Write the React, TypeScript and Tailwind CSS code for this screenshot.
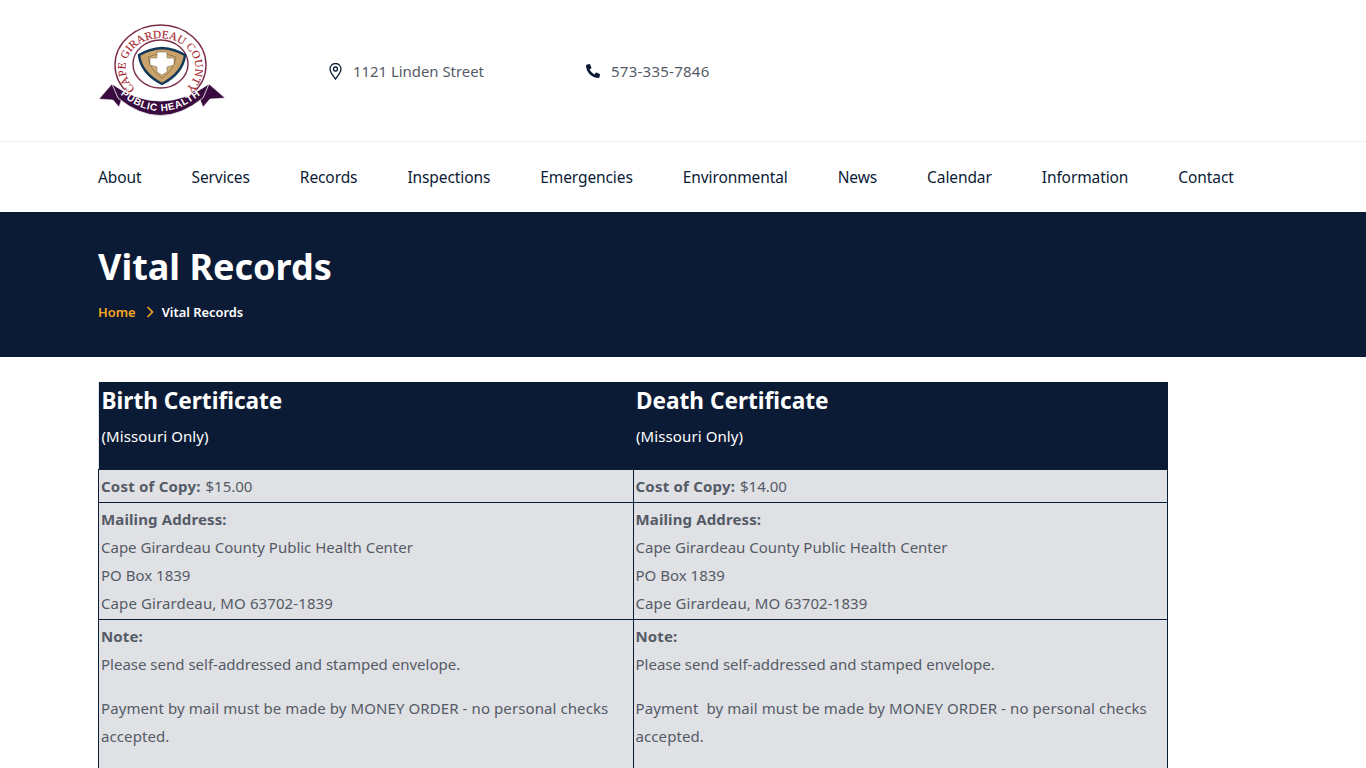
import React from "react";
import { FaPhoneAlt } from "react-icons/fa";

const font = { fontFamily: '"Noto Sans", sans-serif' };

function Logo() {
  return (
    <svg width="128" height="94" viewBox="0 0 128 94" className="block">
      <defs>
        <path id="ringText" d="M40 67 A35 30 0 1 1 85 67" fill="none" />
        <path id="ribbonText" d="M17 66 Q62 108 108 66" fill="none" />
      </defs>
      <ellipse cx="62.5" cy="41" rx="45.5" ry="40" fill="#fff" stroke="#7b2b48" strokeWidth="1.4" />
      <text fontSize="11.2" fontFamily='"Liberation Serif", serif' fill="#a81f2e" stroke="#a81f2e" strokeWidth="0.15" letterSpacing="0.1" textAnchor="middle">
        <textPath href="#ringText" startOffset="50%">CAPE GIRARDEAU COUNTY</textPath>
      </text>
      <ellipse cx="62.5" cy="40" rx="27.5" ry="24" fill="#fff" stroke="#7b2b48" strokeWidth="1.4" />
      <path d="M64 24 Q77 25 87 31 Q85 49 64 60 Q43 49 41 31 Q51 25 64 24Z" fill="#c9a36b" stroke="#14395b" strokeWidth="2.4" />
      <path d="M50 33 Q64 27 78 33 Q76 46 64 54 Q52 46 50 33Z" fill="#cfae7a" stroke="#8c6d3f" strokeWidth="0.8" />
      <path d="M59 28 H69 V34 H76 V41 L69 43 V48 L64 51 L59 48 V43 L52 41 V34 H59Z" fill="#fff" stroke="#6b5a3a" strokeWidth="0.5" />
      <path d="M14 60 L1 75 L15 76 L21 83 L26 68Z" fill="#3a0b3f" stroke="#fff" strokeWidth="0.5" />
      <path d="M111 60 L127 74 L112 75 L105 83 L99 68Z" fill="#3a0b3f" stroke="#fff" strokeWidth="0.5" />
      <path d="M14 60 Q62 94 111 60 L105 74 Q62 109 20 74Z" fill="#3a0b3f" stroke="#fff" strokeWidth="0.8" />
      <text fontSize="10" fontFamily='"Liberation Sans", sans-serif' fontWeight="700" fill="#fff" letterSpacing="0.7" textAnchor="middle">
        <textPath href="#ribbonText" startOffset="50%">PUBLIC HEALTH</textPath>
      </text>
    </svg>
  );
}

function Pin() {
  return (
    <svg width="13" height="17" viewBox="0 0 13 17" fill="none" stroke="#0c1b35" strokeWidth="1.3">
      <path d="M6.5 16 C4 12.5 1 9.5 1 6 A5.5 5.5 0 0 1 12 6 C12 9.5 9 12.5 6.5 16Z" />
      <circle cx="6.5" cy="6" r="2" />
    </svg>
  );
}

const nav = ["About", "Services", "Records", "Inspections", "Emergencies", "Environmental", "News", "Calendar", "Information", "Contact"];

function Cell({ children, right }: { children: React.ReactNode; right?: boolean }) {
  return <td className={"align-top border border-[#0c1b35] px-[2px] py-0 " + (right ? "w-[534px]" : "w-[535px]")}>{children}</td>;
}

function Column({ title }: { title: string }) {
  return (
    <th className="align-top text-left font-normal px-[3px] pt-[1px] h-[87px] text-white">
      <div className="text-[22.6px] leading-[36px] font-bold">{title}</div>
      <div className="text-[15px] leading-[35px] tracking-[0.1px]">(Missouri Only)</div>
    </th>
  );
}

function Address() {
  return (
    <>
      <div className="font-bold tracking-[0.125px]">Mailing Address:</div>
      <div>Cape Girardeau County Public Health Center</div>
      <div>PO Box 1839</div>
      <div className="tracking-[0.1px]">Cape Girardeau, MO 63702-1839</div>
    </>
  );
}

function Cost({ price }: { price: string }) {
  return (
    <div className="pt-[2px] h-[32px]">
      <b className="tracking-[0.2px] mr-[1px]">Cost of Copy:</b> {price}
    </div>
  );
}

function Note({ payment }: { payment: string }) {
  return (
    <>
      <div className="font-bold tracking-[0.125px]">Note:</div>
      <div>Please send self-addressed and stamped envelope.</div>
      <div className="mt-4 whitespace-pre-wrap tracking-[0.09px]">{payment}</div>
      <div className="h-[60px]" />
    </>
  );
}

export default function App() {
  return (
    <div className="h-[768px] overflow-hidden bg-white text-[#555b66] text-[15px] leading-[28px]" style={font}>
      <header className="h-[142px] flex items-start pl-[98px] border-b border-[#eeeeee]">
        <div className="mt-[24px] w-[128px]"><Logo /></div>
        <div className="ml-[103px] mt-[57px] flex items-center gap-[11px] w-[257px]">
          <Pin />
          <span className="text-[14.9px]">1121 Linden Street</span>
        </div>
        <div className="mt-[57px] flex items-center gap-[11px]">
          <FaPhoneAlt size={14} color="#0c1b35" />
          <span className="tracking-[0.25px]">573-335-7846</span>
        </div>
      </header>
      <nav className="h-[70px] flex items-center pl-[98px] gap-[50px] text-[#0c1b35] text-[15.5px] tracking-[-0.1px]">
        {nav.map((n) => (
          <a key={n}>{n}</a>
        ))}
      </nav>
      <section className="h-[145px] bg-[#0c1b35] pl-[98px] pt-[30px] text-white">
        <h1 className="text-[36px] leading-[50px] font-bold">Vital Records</h1>
        <div className="mt-[8px] flex items-center text-[12.9px] leading-[24px] font-semibold">
          <span className="text-[#f5a623]">Home</span>
          <svg width="10" height="12" viewBox="0 0 10 12" fill="none" stroke="#f5a623" strokeWidth="1.7" className="ml-[9px] mr-[7px]">
            <path d="M2.5 1 L7.5 6 L2.5 11" />
          </svg>
          <span>Vital Records</span>
        </div>
      </section>
      <main className="pl-[98px] pt-[25px]">
        <table className="w-[1070px] table-fixed border-collapse bg-[#dfe1e5]">
          <thead className="bg-[#0c1b35]">
            <tr>
              <Column title="Birth Certificate" />
              <Column title="Death Certificate" />
            </tr>
          </thead>
          <tbody>
            <tr>
              <Cell><Cost price="$15.00" /></Cell>
              <Cell right><Cost price="$14.00" /></Cell>
            </tr>
            <tr>
              <Cell><div className="pt-[2px] pb-[2px]"><Address /></div></Cell>
              <Cell right><div className="pt-[2px] pb-[2px]"><Address /></div></Cell>
            </tr>
            <tr>
              <Cell><div className="pt-[2px]"><Note payment="Payment by mail must be made by MONEY ORDER - no personal checks accepted." /></div></Cell>
              <Cell right><div className="pt-[2px]"><Note payment="Payment  by mail must be made by MONEY ORDER - no personal checks accepted." /></div></Cell>
            </tr>
          </tbody>
        </table>
      </main>
    </div>
  );
}
